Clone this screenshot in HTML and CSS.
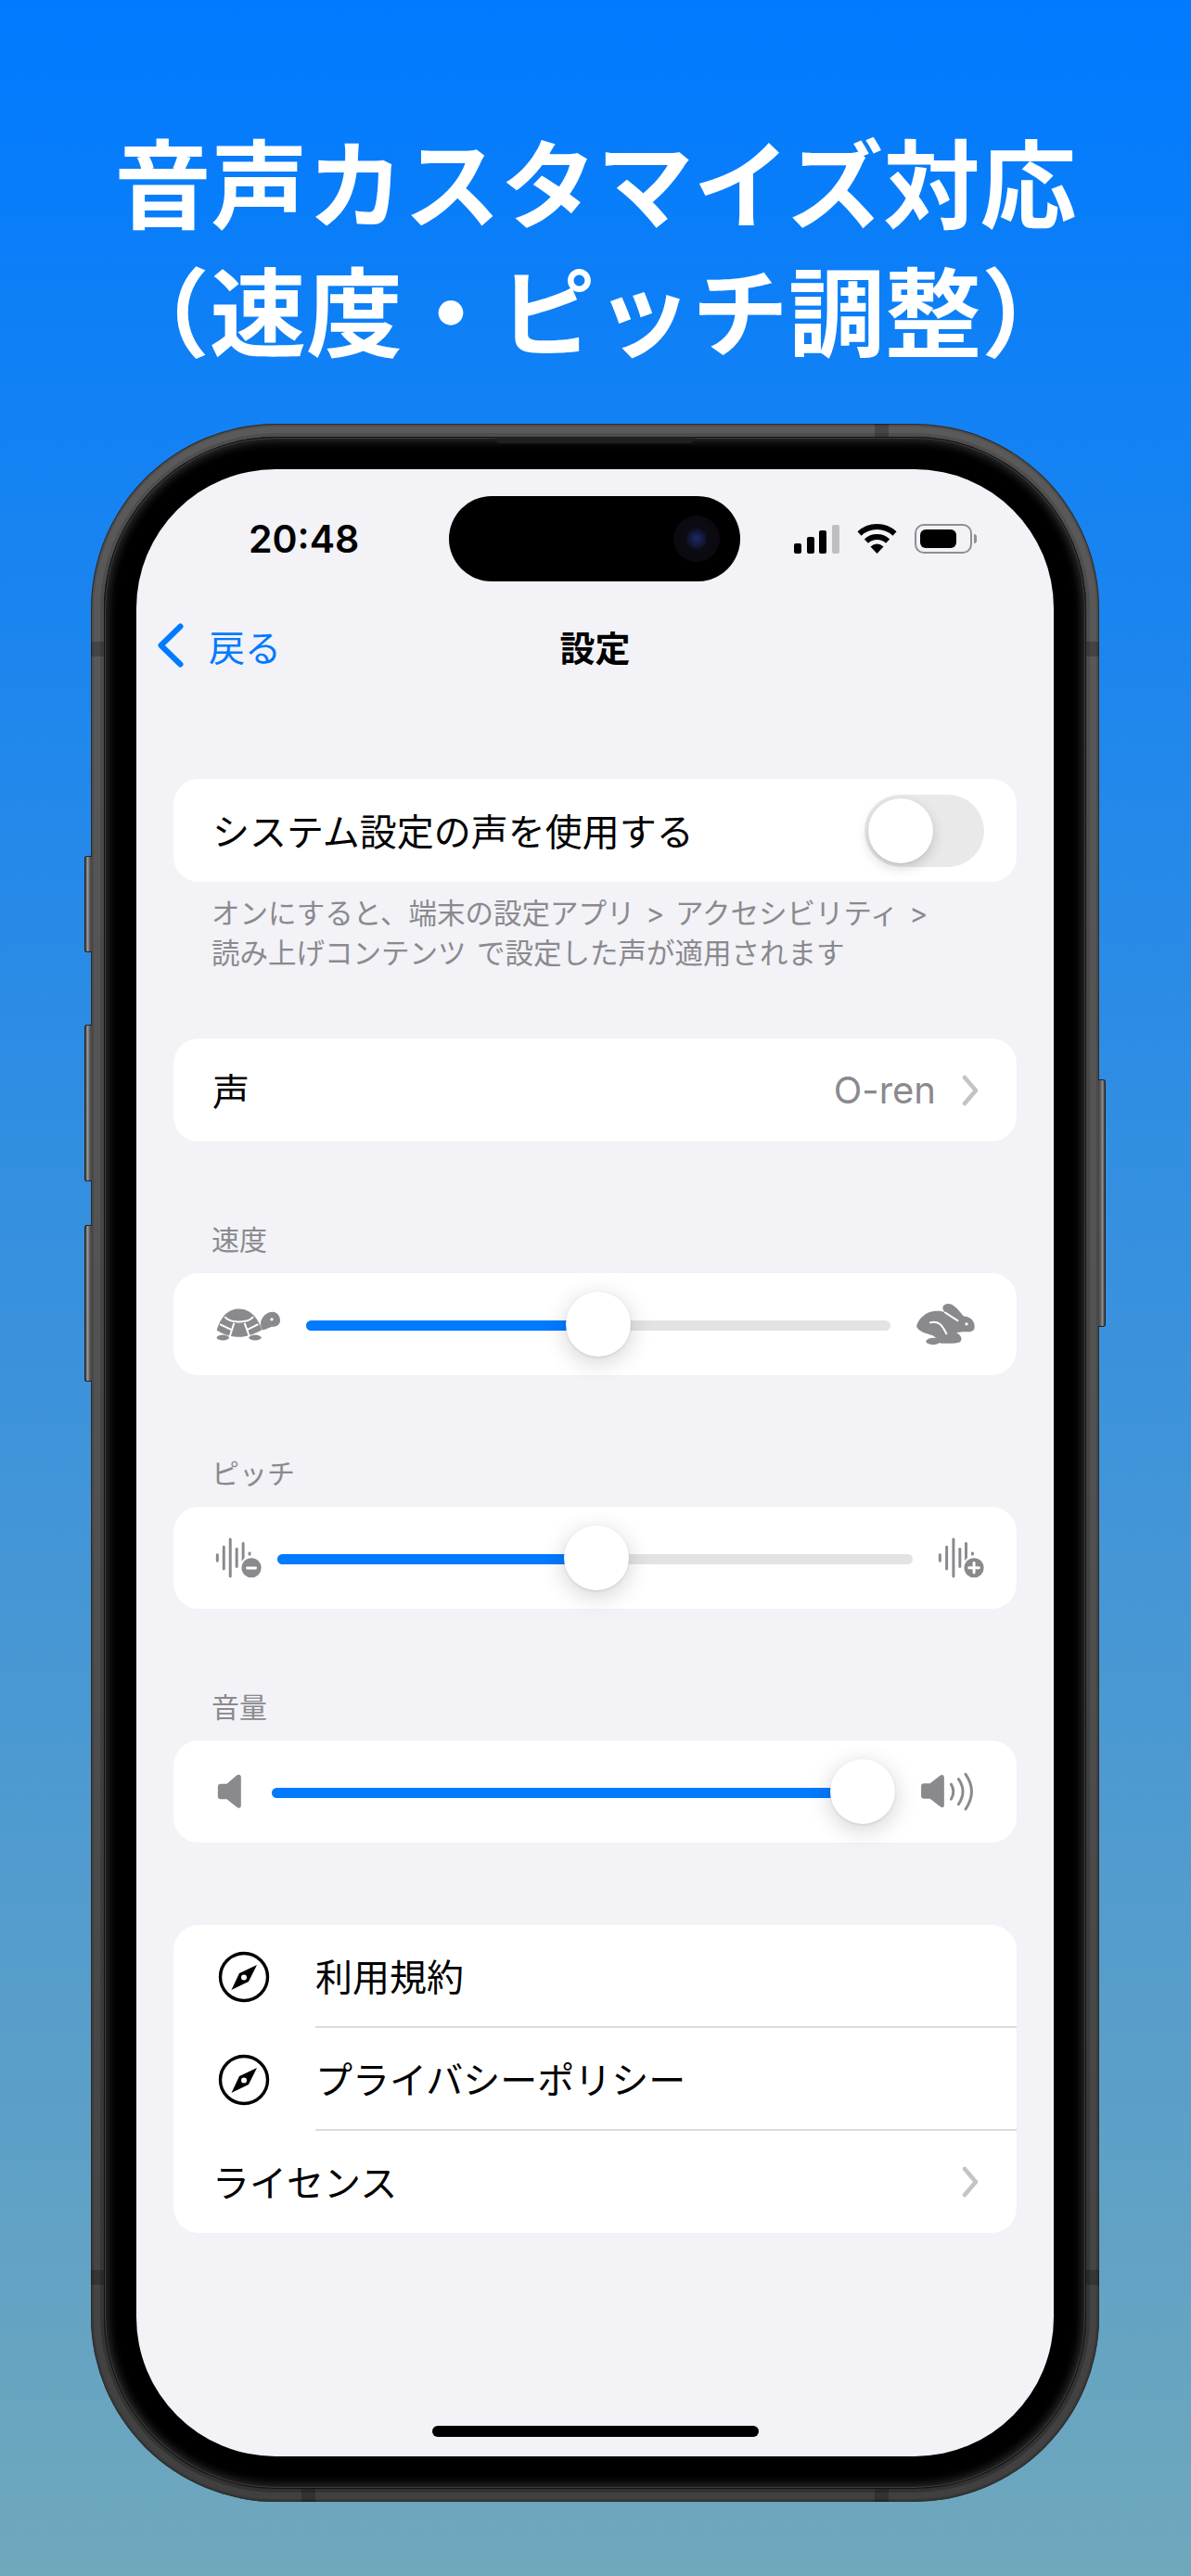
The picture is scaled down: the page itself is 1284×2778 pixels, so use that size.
FILE: index.html
```html
<!doctype html>
<html lang="ja">
  <head>
    <meta charset="utf-8">
    <title>音声カスタマイズ対応</title>
    <link rel="stylesheet" href="styles.css">
  </head>
  <body>
    <h1 class="headline">音声カスタマイズ対応<br>（速度・ピッチ調整）</h1>

    <div class="phone">
      <!-- side buttons and antenna bands sit on the frame -->
      <span class="side-btn btn-action"></span>
      <span class="side-btn btn-up"></span>
      <span class="side-btn btn-down"></span>
      <span class="side-btn btn-power"></span>
      <span class="band band-top-r"></span>
      <span class="band band-bot-l"></span>
      <span class="band band-bot-r"></span>
      <span class="band band-side-l1"></span>
      <span class="band band-side-l2"></span>
      <span class="band band-side-r1"></span>
      <span class="band band-side-r2"></span>
      <span class="speaker"></span>

      <div class="bezel">
        <div class="screen">
          <div class="status">
            <div class="time">20:48</div>
            <div class="island"><span class="camera"></span></div>
            <div class="status-icons">
              <div class="signal">
                <span class="bar bar1"></span>
                <span class="bar bar2"></span>
                <span class="bar bar3"></span>
                <span class="bar bar4"></span>
              </div>
              <svg class="wifi" viewBox="0 0 43 32">
                <path d="M2.5 10.5A28 28 0 0 1 40.5 10.5" fill="none" stroke="#000" stroke-width="6"/>
                <path d="M9.9 18.6A17 17 0 0 1 33.1 18.6" fill="none" stroke="#000" stroke-width="6"/>
                <path d="M21.5 32L14.5 24.5Q21.5 18.5 28.5 24.5Z"/>
              </svg>
              <div class="battery"><span class="battery-level"></span></div>
              <span class="battery-tip"></span>
            </div>
          </div>

          <div class="nav">
            <div class="back">
              <svg class="back-chevron" viewBox="0 0 28 48">
                <path d="M24.5 3.5L3.5 24L24.5 44.5" fill="none" stroke="#007aff" stroke-width="6" stroke-linecap="round" stroke-linejoin="round"/>
              </svg>
              <span>戻る</span>
            </div>
            <div class="nav-title">設定</div>
          </div>

          <div class="card first-card">
            <div class="row">
              <span>システム設定の声を使用する</span>
              <div class="toggle"><span class="knob"></span></div>
            </div>
          </div>
          <p class="note">オンにすると、端末の設定アプリ &gt; アクセシビリティ &gt;<br>読み上げコンテンツ で設定した声が適用されます</p>

          <div class="card voice-card">
            <div class="row">
              <span>声</span>
              <div class="value">
                <span>O-ren</span>
                <svg class="chevron" viewBox="0 0 18 34"><path d="M3 3L15 17L3 31" fill="none" stroke="#c4c4c7" stroke-width="4.5" stroke-linecap="round" stroke-linejoin="round"/></svg>
              </div>
            </div>
          </div>

          <div class="section-label">速度</div>
          <div class="card slider-row speed-row">
            <svg class="ico-turtle" viewBox="160 333 207 104">
              <path fill="#8a8a8e" d="M162 403C170 375 190 334 234 334C276 334 298 372 308 402C290 412 262 424 234 425C205 425 178 414 162 403Z"/>
              <path fill="none" stroke="#fff" stroke-width="6" d="M188 360C205 380 262 382 280 360M218 380L204 424M252 380L268 424M172 384L210 402M296 384L260 402"/>
              <path fill="#8a8a8e" d="M304 378C310 356 325 344 342 344C358 344 367 358 367 372C367 385 355 392 340 392L312 403C306 400 303 388 304 378Z"/>
              <circle cx="340" cy="368" r="5" fill="#fff"/>
              <ellipse cx="182" cy="427" rx="20" ry="9" fill="#8a8a8e"/>
              <ellipse cx="286" cy="427" rx="20" ry="9" fill="#8a8a8e"/>
            </svg>
            <div class="slider">
              <div class="fill" style="width: 50%"></div>
              <span class="thumb" style="left: 50%"></span>
            </div>
            <svg class="ico-rabbit" viewBox="140 315 195 140">
              <path fill="#8a8a8e" d="M143 390C150 365 175 342 205 341C218 340 228 342 236 346C226 335 224 322 240 318C258 314 272 328 296 358C318 358 332 375 331 392C331 402 326 407 316 408L292 408L272 411C290 418 294 438 280 443C262 448 245 444 228 446C212 446 212 428 196 420C175 413 150 408 143 390Z"/>
              <path fill="none" stroke="#fff" stroke-width="6" stroke-linecap="round" d="M236 346L276 372M188 378C215 372 225 385 240 414"/>
              <circle cx="305" cy="383" r="5" fill="#fff"/>
              <ellipse cx="197" cy="439" rx="23" ry="11" fill="#8a8a8e"/>
            </svg>
          </div>

          <div class="section-label">ピッチ</div>
          <div class="card slider-row pitch-row">
            <svg class="ico-wave" viewBox="125 105 160 145">
              <path fill="none" stroke="#8a8a8e" stroke-width="9" stroke-linecap="round" d="M135 168V187M156 142V214M177 117V238M198 149V206M219 131V190M240 162V166"/>
              <circle cx="246" cy="210" r="38" fill="#fff"/>
              <circle cx="246" cy="210" r="32" fill="#8a8a8e"/>
              <rect x="228" y="206" width="36" height="9" rx="4" fill="#fff"/>
            </svg>
            <div class="slider">
              <div class="fill" style="width: 50.2%"></div>
              <span class="thumb" style="left: 50.2%"></span>
            </div>
            <svg class="ico-wave" viewBox="150 105 160 145">
              <path fill="none" stroke="#8a8a8e" stroke-width="9" stroke-linecap="round" d="M160 168V187M182 142V214M204 117V238M225 149V206M245 131V190M266 162V166"/>
              <circle cx="271" cy="210" r="38" fill="#fff"/>
              <circle cx="271" cy="210" r="32" fill="#8a8a8e"/>
              <path fill="none" stroke="#fff" stroke-width="9" stroke-linecap="round" d="M255 210H287M271 194V226"/>
            </svg>
          </div>

          <div class="section-label">音量</div>
          <div class="card slider-row volume-row">
            <svg class="ico-vol-low" viewBox="134 100 80 114">
              <path fill="#8a8a8e" d="M136 142Q136 132 146 132L165 132L198 104Q210 98 211 110L211 203Q210 215 198 208L165 182L146 182Q136 182 136 172Z"/>
            </svg>
            <div class="slider">
              <div class="fill" style="width: 94.8%"></div>
              <span class="thumb" style="left: 94.8%"></span>
            </div>
            <svg class="ico-vol-high" viewBox="155 98 175 124">
              <path fill="#8a8a8e" d="M158 142Q158 132 168 132L187 132L220 106Q232 100 233 112L233 203Q232 215 220 208L187 182L168 182Q158 182 158 172Z"/>
              <path fill="none" stroke="#8a8a8e" stroke-width="9" stroke-linecap="round" d="M256 135Q270 158 256 183M280 118Q308 158 280 200M303 102Q342 158 303 216"/>
            </svg>
          </div>

          <div class="card links-card">
            <div class="link-row">
              <svg class="compass" viewBox="0 0 56 56">
                <circle cx="28" cy="28" r="25.5" fill="none" stroke="#000" stroke-width="3.4"/>
                <path d="M42 15L33 33L14.5 42L23 24Z"/>
                <circle cx="28" cy="28.5" r="3" fill="#fff"/>
              </svg>
              <div class="link-body">利用規約</div>
            </div>
            <div class="link-row">
              <svg class="compass" viewBox="0 0 56 56">
                <circle cx="28" cy="28" r="25.5" fill="none" stroke="#000" stroke-width="3.4"/>
                <path d="M42 15L33 33L14.5 42L23 24Z"/>
                <circle cx="28" cy="28.5" r="3" fill="#fff"/>
              </svg>
              <div class="link-body">プライバシーポリシー</div>
            </div>
            <div class="row license-row">
              <span>ライセンス</span>
              <svg class="chevron" viewBox="0 0 18 34"><path d="M3 3L15 17L3 31" fill="none" stroke="#c4c4c7" stroke-width="4.5" stroke-linecap="round" stroke-linejoin="round"/></svg>
            </div>
          </div>

          <div class="home-bar"></div>
        </div>
      </div>
    </div>
  </body>
</html>
```

FILE: styles.css
```css
* {
    box-sizing: border-box;
}

html, body {
    margin: 0;
    padding: 0;
}

body {
    width: 1284px;
    height: 2778px;
    overflow: hidden;
    background: linear-gradient(180deg, #007aff 0%, #70a8bc 100%);
    font-family: "Inter", "Noto Sans CJK JP", sans-serif;
    color: #000;
}

.headline {
    margin: 0;
    padding-top: 125px;
    text-align: center;
    color: #fff;
    font-family: "Noto Sans CJK JP", sans-serif;
    font-size: 104px;
    line-height: 138px;
    font-weight: 700;
}

/* phone frame */
.phone {
    position: relative;
    width: 1087px;
    height: 2241px;
    margin: 56px 0 0 98px;
    padding: 14px;
    border-radius: 200px;
    background: linear-gradient(180deg, #4e4e4e 0%, #444 50%, #323232 100%);
    box-shadow: inset 0 0 0 1px #2c2c2c, inset 0 0 0 3px rgba(0, 0, 0, 0.12), inset 0 0 0 10px rgba(255, 255, 255, 0.07);
}

.bezel {
    height: 100%;
    padding: 35px;
    border-radius: 186px;
    background: #000;
    box-shadow: inset 0 0 0 1px #111, inset 0 0 0 2px #3c3c3c, inset 0 0 10px 5px #2c2c2c;
}

.screen {
    position: relative;
    height: 100%;
    padding-top: 29px;
    border-radius: 150px;
    background: #f2f2f7;
    overflow: hidden;
}

.side-btn {
    position: absolute;
    width: 8px;
    left: -7px;
    border: 1px solid #222;
    border-right: 0;
    border-radius: 3px 0 0 3px;
    background: linear-gradient(90deg, #3a3a3a 0%, #9a9a9a 35%, #555 70%, #444 100%);
}

.btn-action { top: 466px; height: 104px; }
.btn-up { top: 648px; height: 169px; }
.btn-down { top: 864px; height: 169px; }

.btn-power {
    left: auto;
    right: -7px;
    top: 707px;
    height: 267px;
    border: 1px solid #222;
    border-left: 0;
    border-radius: 0 3px 3px 0;
    background: linear-gradient(270deg, #3a3a3a 0%, #8c8c8c 35%, #555 70%, #444 100%);
}

.band {
    position: absolute;
    background: rgba(0, 0, 0, 0.22);
}

.band-top-r { top: 0; left: 845px; width: 15px; height: 14px; }
.band-bot-l { bottom: 0; left: 227px; width: 15px; height: 14px; }
.band-bot-r { bottom: 0; left: 845px; width: 15px; height: 14px; }
.band-side-l1 { left: 0; top: 235px; width: 14px; height: 16px; }
.band-side-l2 { left: 0; top: 1991px; width: 14px; height: 16px; }
.band-side-r1 { right: 0; top: 235px; width: 14px; height: 16px; }
.band-side-r2 { right: 0; top: 1991px; width: 14px; height: 16px; }

.speaker {
    position: absolute;
    z-index: 1;
    top: 14px;
    left: 435px;
    width: 216px;
    height: 7px;
    border-radius: 0 0 6px 6px;
    background: #202020;
}

/* status bar */
.status {
    display: flex;
    align-items: center;
    height: 92px;
}

.time {
    width: 216px;
    margin-left: 121px;
    font-size: 41px;
    font-weight: 600;
}

.island {
    display: flex;
    align-items: center;
    justify-content: flex-end;
    width: 314px;
    height: 92px;
    padding-right: 22px;
    border-radius: 46px;
    background: #000;
}

.camera {
    width: 50px;
    height: 50px;
    border-radius: 50%;
    background: radial-gradient(circle, #1d2a66 0%, #10132c 28%, #0b0b12 34%, #08080c 100%);
}

.status-icons {
    display: flex;
    align-items: center;
    margin-left: 58px;
}

.signal {
    display: flex;
    align-items: flex-end;
    gap: 5.5px;
    height: 31px;
}

.bar {
    width: 8px;
    border-radius: 2px;
    background: #000;
}

.bar1 { height: 11px; }
.bar2 { height: 18px; }
.bar3 { height: 25px; }
.bar4 { height: 31px; background: #bebec2; }

.wifi {
    width: 43px;
    height: 32px;
    margin-left: 19px;
}

.battery {
    width: 62px;
    height: 32px;
    margin-left: 19px;
    padding: 4px;
    border: 2px solid #8e8e93;
    border-radius: 10px;
}

.battery-level {
    display: block;
    width: 39px;
    height: 100%;
    border-radius: 6px;
    background: #000;
}

.battery-tip {
    width: 3px;
    height: 10px;
    margin-left: 2px;
    border-radius: 0 3px 3px 0;
    background: #8e8e93;
}

/* nav bar */
.nav {
    display: grid;
    grid-template-columns: 1fr auto 1fr;
    align-items: center;
    height: 138px;
    padding: 0 23px;
}

.back {
    display: flex;
    align-items: center;
    gap: 27px;
    color: #007aff;
    font-size: 39px;
}

.back-chevron {
    width: 28px;
    height: 48px;
}

.nav-title {
    font-size: 38px;
    font-weight: 700;
}

/* cards */
.card {
    margin: 0 40px;
    border-radius: 27px;
    background: #fff;
}

.first-card {
    margin-top: 75px;
}

.voice-card {
    margin-top: 71px;
}

.row {
    display: flex;
    align-items: center;
    justify-content: space-between;
    height: 111px;
    padding: 0 35px 0 42px;
    font-size: 40px;
}

.row > span, .link-body {
    padding-bottom: 2px;
}

.note {
    margin: 12px 40px 0;
    padding-left: 41px;
    color: #8a8a8e;
    font-size: 30.5px;
    line-height: 43px;
    word-spacing: 3px;
}

.toggle {
    display: flex;
    width: 129px;
    height: 78px;
    padding: 4px;
    border-radius: 39px;
    background: #e9e9ea;
}

.knob {
    width: 70px;
    height: 70px;
    border-radius: 50%;
    background: #fff;
    box-shadow: 0 5px 14px rgba(0, 0, 0, 0.16), 0 1px 2px rgba(0, 0, 0, 0.08);
}

.value {
    display: flex;
    align-items: center;
    gap: 28px;
    color: #8a8a8e;
    padding-right: 6px;
}

.chevron {
    width: 18px;
    height: 34px;
}

.section-label {
    height: 36px;
    margin: 88px 40px 18px;
    padding-left: 41px;
    color: #8a8a8e;
    font-size: 30px;
    line-height: 36px;
}

/* sliders */
.slider-row {
    display: flex;
    align-items: center;
    height: 110px;
}

.speed-row { padding: 0 44px 0 46px; }
.speed-row .slider { margin-left: 28px; margin-right: 27px; }

.pitch-row { padding: 0 33px 0 44px; }
.pitch-row .slider { margin-left: 15px; margin-right: 26px; }

.volume-row { padding: 0 46px 0 47px; }
.volume-row .slider { margin-left: 32px; margin-right: 27px; }

.slider {
    position: relative;
    flex: 1;
    height: 11px;
    margin-top: 3px;
    border-radius: 6px;
    background: #e3e3e5;
}

.fill {
    height: 100%;
    border-radius: 6px;
    background: #007aff;
}

.thumb {
    position: absolute;
    top: 50%;
    width: 70px;
    height: 70px;
    margin: -37px 0 0 -35px;
    border-radius: 50%;
    background: #fff;
    box-shadow: 0 6px 26px rgba(0, 0, 0, 0.18), 0 1px 3px rgba(0, 0, 0, 0.1);
}

.ico-turtle { width: 69px; height: 35px; flex: none; }
.ico-rabbit { width: 65px; height: 47px; flex: none; }
.ico-wave { width: 53px; height: 48px; flex: none; }
.ico-vol-low { width: 27px; height: 38px; flex: none; }
.ico-vol-high { width: 58px; height: 41px; flex: none; }

/* links */
.links-card {
    margin-top: 89px;
}

.link-row {
    display: flex;
    align-items: center;
    gap: 49px;
    height: 111px;
    padding-left: 48px;
}

.compass {
    flex: none;
    width: 56px;
    height: 56px;
}

.link-body {
    display: flex;
    align-items: center;
    flex: 1;
    height: 100%;
    border-bottom: 2px solid #dcdce0;
    font-size: 40px;
}

.license-row {
    height: 110px;
    padding-right: 41px;
}

.home-bar {
    position: absolute;
    bottom: 21px;
    left: 319px;
    width: 352px;
    height: 12px;
    border-radius: 6px;
    background: #000;
}
```
